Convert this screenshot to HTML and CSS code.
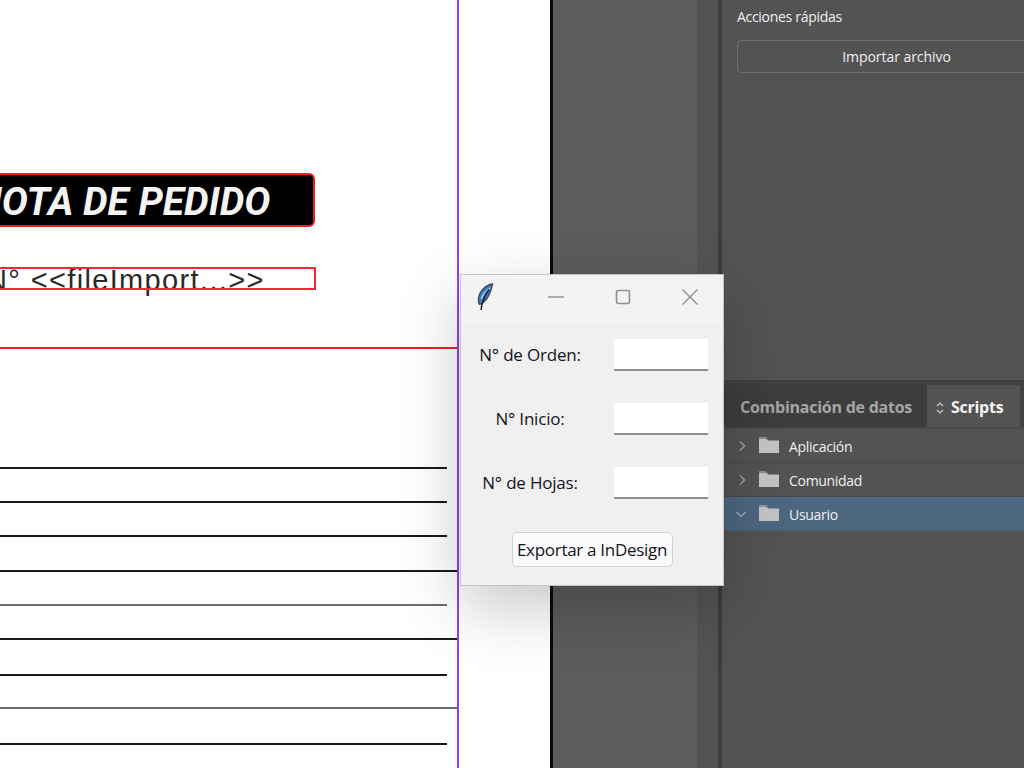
FILE: index.html
```html
<!DOCTYPE html>
<html lang="es">
<head>
    <meta charset="UTF-8">
    <title>Exportar a InDesign</title>
    <link rel="stylesheet" href="styles.css">
</head>
<body>
    <div class="workspace">
        <div class="page-area">
            <!-- page items sit on the free document canvas -->
            <div class="title-frame"><span class="title-text">NOTA DE PEDIDO</span></div>
            <div class="number-text">N° &lt;&lt;fileImport...&gt;&gt;</div>
            <div class="number-frame"></div>
            <div class="red-rule"></div>
            <div class="margin-guide"></div>
            <div class="rules">
                <div class="rule"></div>
                <div class="rule"></div>
                <div class="rule"></div>
                <div class="rule rule-long step-up"></div>
                <div class="rule rule-grey"></div>
                <div class="rule rule-long"></div>
                <div class="rule step-more"></div>
                <div class="rule rule-long rule-grey step-less"></div>
                <div class="rule step-more"></div>
            </div>
        </div>
        <div class="pasteboard-edge"></div>
        <div class="pasteboard"></div>
        <div class="dock-strip"></div>
        <div class="dock-line"></div>
        <div class="side-panel">
            <div class="actions">
                <div class="actions-title">Acciones rápidas</div>
                <div class="import-btn">Importar archivo</div>
            </div>
            <div class="scripts-panel">
                <div class="tabs">
                    <div class="tab">Combinación de datos</div>
                    <div class="tab tab-active">
                        <svg class="sort-icon" width="8" height="14" viewBox="0 0 8 14"><path d="M1 5l3-3 3 3M1 9l3 3 3-3" fill="none" stroke="#c8c8c8" stroke-width="1.2"/></svg>
                        Scripts
                    </div>
                </div>
                <div class="tree-row">
                    <svg class="chevron" width="10" height="12" viewBox="0 0 10 12"><path d="M3 1.500l4.500 4.500L3 10.500" fill="none" stroke="#a8a8a8" stroke-width="1.2"/></svg>
                    <svg class="folder" width="22" height="18" viewBox="0 0 22 18"><path d="M1 2.500h7l2 2h11v12.500h-20z" fill="#c4c4c4"/><path d="M1 1.500h7l2 2" fill="none" stroke="#8e8e8e"/></svg>
                    <span>Aplicación</span>
                </div>
                <div class="tree-row">
                    <svg class="chevron" width="10" height="12" viewBox="0 0 10 12"><path d="M3 1.500l4.500 4.500L3 10.500" fill="none" stroke="#a8a8a8" stroke-width="1.2"/></svg>
                    <svg class="folder" width="22" height="18" viewBox="0 0 22 18"><path d="M1 2.500h7l2 2h11v12.500h-20z" fill="#c4c4c4"/><path d="M1 1.500h7l2 2" fill="none" stroke="#8e8e8e"/></svg>
                    <span>Comunidad</span>
                </div>
                <div class="tree-row tree-row-selected">
                    <svg class="chevron" width="12" height="10" viewBox="0 0 12 10"><path d="M1.500 3l4.500 4.500L10.500 3" fill="none" stroke="#a8b4c0" stroke-width="1.2"/></svg>
                    <svg class="folder" width="22" height="18" viewBox="0 0 22 18"><path d="M1 2.500h7l2 2h11v12.500h-20z" fill="#c4c4c4"/><path d="M1 1.500h7l2 2" fill="none" stroke="#8e98a4"/></svg>
                    <span>Usuario</span>
                </div>
            </div>
        </div>
    </div>

    <div class="dialog">
        <div class="titlebar">
            <svg class="feather" width="18" height="28" viewBox="0 0 18 28">
                <path d="M16.500 1C10 2 3.500 8 2.500 15c-.3 2.500 0 4.500 1 6.500C10 19 15 11 16.500 1z" fill="#3f7fd0" stroke="#3a4653" stroke-width="1.300"/>
                <path d="M14 5C10 8 6.500 12 5.500 16" fill="none" stroke="#9cc8f2" stroke-width="1.500"/>
                <path d="M13 6.500C9 12 6 18 5 27" fill="none" stroke="#10151c" stroke-width="1.400"/>
            </svg>
            <svg class="win-btn" width="16" height="16" viewBox="0 0 16 16"><path d="M0 8h16" stroke="#8f8f8f" stroke-width="1.400"/></svg>
            <svg class="win-btn" width="16" height="16" viewBox="0 0 16 16"><rect x="1.500" y="1.500" width="13" height="13" rx="2" fill="none" stroke="#8f8f8f" stroke-width="1.600"/></svg>
            <svg class="win-btn" width="16" height="16" viewBox="0 0 16 16"><path d="M.5.5l15 15M15.500.5l-15 15" stroke="#8f8f8f" stroke-width="1.400"/></svg>
        </div>
        <div class="field">
            <label class="field-label">N° de Orden:</label>
            <div class="field-input"></div>
        </div>
        <div class="field">
            <label class="field-label">N° Inicio:</label>
            <div class="field-input"></div>
        </div>
        <div class="field">
            <label class="field-label">N° de Hojas:</label>
            <div class="field-input"></div>
        </div>
        <div class="dialog-actions">
            <button class="export-btn">Exportar a InDesign</button>
        </div>
    </div>
</body>
</html>
```

FILE: styles.css
```css
html, body {
    margin: 0;
    padding: 0;
    width: 1024px;
    height: 768px;
    overflow: hidden;
    background: #fff;
}
.workspace {
    display: flex;
    height: 768px;
}
.page-area {
    position: relative;
    width: 550px;
    flex: none;
    background: #fff;
    overflow: hidden;
}
.title-frame {
    position: absolute;
    left: -60px;
    top: 173px;
    width: 375px;
    height: 54px;
    box-sizing: border-box;
    background: #000;
    border: 2px solid #ee1c25;
    border-radius: 6px;
    overflow: hidden;
}
.title-text {
    position: absolute;
    left: 33px;
    top: 2px;
    color: #f4f4f4;
    font-family: "Roboto", sans-serif;
    font-weight: 700;
    font-style: italic;
    font-size: 39px;
    line-height: 50px;
    white-space: nowrap;
}
.number-text {
    position: absolute;
    left: -14px;
    top: 262px;
    font-family: "Liberation Sans", sans-serif;
    font-size: 29px;
    letter-spacing: 1.35px;
    line-height: 36px;
    color: #2a2a2a;
    white-space: nowrap;
}
.number-frame {
    position: absolute;
    left: -10px;
    top: 267px;
    width: 322px;
    height: 19px;
    border: 2px solid #ee2a34;
}
.red-rule {
    position: absolute;
    left: 0;
    top: 347px;
    width: 458px;
    height: 2px;
    background: #f0202a;
}
.margin-guide {
    position: absolute;
    left: 457px;
    top: 0;
    width: 2px;
    height: 768px;
    background: #8f3dff;
}
.rules {
    position: absolute;
    left: 0;
    top: 467px;
    display: flex;
    flex-direction: column;
}
.rule {
    width: 447px;
    height: 2px;
    margin-bottom: 32px;
    background: #1a1a1a;
}
.rule-long {
    width: 457px;
}
.rule-grey {
    background: #6e6e6e;
}
.step-up {
    margin-top: 1px;
}
.step-more {
    margin-top: 2px;
}
.step-less {
    margin-top: -1px;
}
.pasteboard-edge {
    width: 3px;
    flex: none;
    background: #0a0a0a;
}
.pasteboard {
    width: 144px;
    flex: none;
    background: #5c5c5c;
}
.dock-strip {
    width: 21px;
    flex: none;
    background: #535353;
}
.dock-line {
    width: 4px;
    flex: none;
    background: #3c3c3c;
}
.side-panel {
    flex: 1;
    display: flex;
    flex-direction: column;
    background: #535353;
    color: #f0f0f0;
    font-family: "Open Sans", sans-serif;
    font-size: 14px;
}
.actions {
    height: 380px;
    padding: 7px 0 0 15px;
    box-sizing: border-box;
}
.actions-title {
    line-height: 20px;
    letter-spacing: -0.3px;
}
.import-btn {
    margin: 13px -32px 0 0;
    height: 33px;
    border: 1px solid #6f6f6f;
    border-radius: 4px;
    box-sizing: border-box;
    line-height: 31px;
    text-align: center;
    letter-spacing: -0.05px;
}
.scripts-panel {
    flex: 1;
    border-top: 2px solid #3f3f3f;
}
.tabs {
    display: flex;
    height: 47px;
    padding-top: 3px;
    box-sizing: border-box;
    background: #424242;
    border-bottom: 2px solid #4a4a4a;
}
.tab {
    width: 205px;
    padding-left: 18px;
    box-sizing: border-box;
    line-height: 44px;
    font-size: 16px;
    font-weight: 700;
    letter-spacing: -0.25px;
    color: #a6a6a6;
    background: #3d3d3d;
}
.tab-active {
    width: 93px;
    padding-left: 9px;
    color: #f4f4f4;
    background: #535353;
}
.sort-icon {
    vertical-align: -2px;
    margin-right: 3px;
}
.tree-row {
    display: flex;
    align-items: center;
    height: 34px;
    box-sizing: border-box;
    padding: 2px 0 0 15px;
    border-bottom: 1px solid #494949;
    font-size: 14px;
    letter-spacing: -0.3px;
}
.tree-row-selected {
    background: #4d6780;
    padding-left: 13px;
    border-bottom-color: #4b5c6c;
}
.chevron {
    margin: 0 10px 2px 0;
}
.folder {
    margin: 0 9px 4px 1px;
}
.dialog {
    position: absolute;
    left: 460px;
    top: 274px;
    width: 264px;
    height: 312px;
    box-sizing: border-box;
    background: #f0f0f0;
    border: 1px solid #c4c4c4;
    box-shadow: 0 22px 60px rgba(0, 0, 0, 0.22);
    font-family: "Open Sans", sans-serif;
    color: #14141e;
}
.titlebar {
    display: flex;
    align-items: center;
    height: 47px;
    background: #f3f3f3;
    padding: 0 0 3px 15px;
    box-sizing: border-box;
}
.feather {
    flex: none;
    margin-right: 54px;
}
.win-btn {
    flex: none;
    margin-right: 51px;
}
.field {
    display: flex;
    align-items: center;
    justify-content: space-between;
    height: 33px;
    margin: 16px 15px 31px 0;
}
.field-label {
    flex: 1;
    text-align: center;
    font-size: 17px;
    letter-spacing: -0.2px;
    padding-right: 15px;
}
.field-input {
    width: 94px;
    height: 32px;
    box-sizing: border-box;
    background: #fff;
    border-bottom: 2px solid #8f8f8f;
}
.dialog-actions {
    display: flex;
    justify-content: center;
    margin-top: 33px;
}
.export-btn {
    width: 161px;
    height: 35px;
    padding: 0;
    background: #fbfbfb;
    border: 1px solid #d0d0d0;
    border-radius: 5px;
    font-family: "Open Sans", sans-serif;
    font-size: 17px;
    letter-spacing: -0.3px;
    color: #14141e;
}
```
